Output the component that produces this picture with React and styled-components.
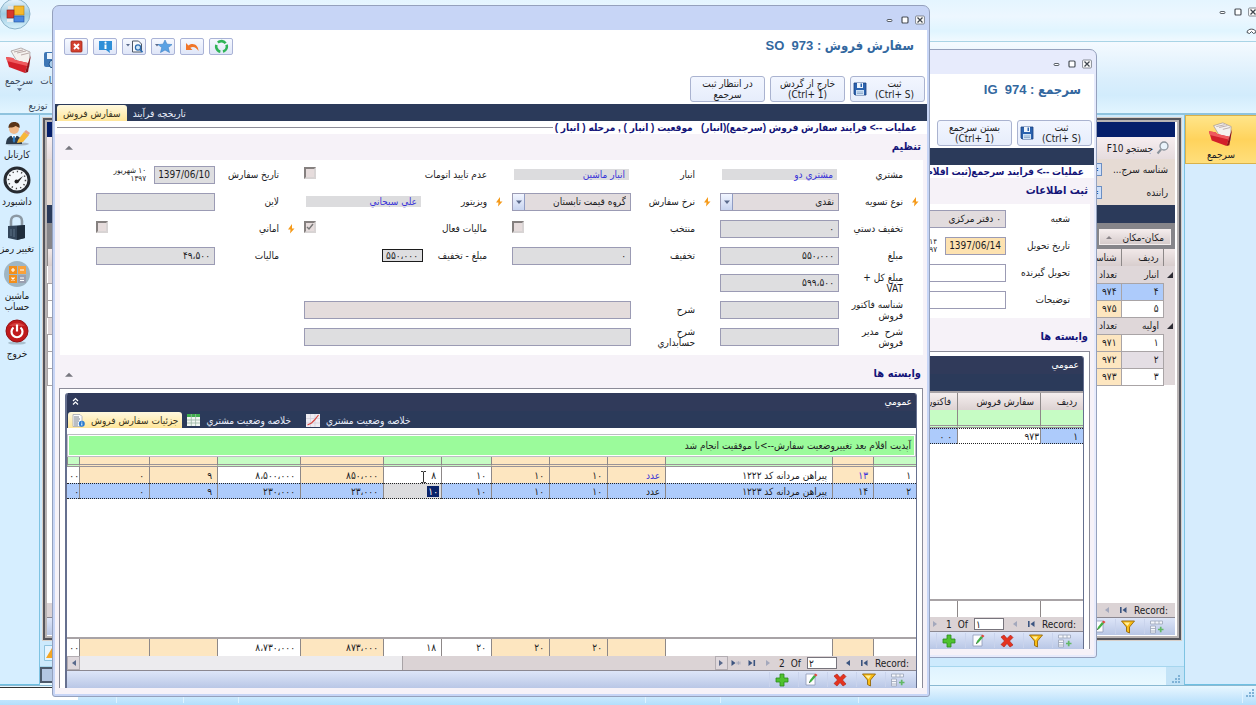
import React, { useId } from 'react';
import styled, { createGlobalStyle, css } from 'styled-components';

const GlobalStyle = createGlobalStyle`
  *, *::before, *::after { box-sizing: border-box; }
  html, body, #root { height: 100%; }
  body {
    margin: 0;
    overflow: hidden;
    font-family: "DejaVu Sans Condensed", "DejaVu Sans", sans-serif;
    font-size: 10px;
    line-height: 11px;
    color: #1c1c24;
  }
  button, input, select { font: inherit; color: inherit; margin: 0; border-radius: 0; }
`;

/* ---------- desktop shell ---------- */

const Desktop = styled.div`
  position: relative;
  height: 100vh;
  display: flex;
  flex-direction: column;
  overflow: hidden;
  background: #cdeafd;
`;

const TopStrip = styled.header`
  height: 41px;
  flex: none;
  display: flex;
  justify-content: space-between;
  background: linear-gradient(#e4f5ff, #edf7ff 40%, #e0f5ff 75%, #f0f9ff);
`;

const TopControls = styled.div`
  display: flex;
  flex-direction: column;
  align-items: flex-end;
  gap: 9px;
  padding-top: 7px;
  margin-right: -2px;
`;

const Ribbon = styled.nav`
  height: 74px;
  flex: none;
  padding-top: 4px;
  border-top: 1px solid #a9d4e6;
  border-bottom: 2px solid #8fc3de;
  background: linear-gradient(#f4faff, #d9eefc 55%, #d2ecfc 75%, #e2f5ff);
`;

const RibbonItems = styled.div`
  display: flex;
  height: 54px;
`;

const RibbonButton = styled.button`
  display: flex;
  flex-direction: column;
  align-items: center;
  gap: 1px;
  width: ${(p) => p.$width}px;
  padding: 0;
  border: 0;
  background: none;
  color: #3a4a5c;
  svg { flex: none; }
`;

const RibbonCaption = styled.div`
  width: 76px;
  text-align: center;
  color: #3a4a5c;
`;

const Body = styled.div`
  flex: 1;
  min-height: 0;
  display: flex;
`;

const LeftRail = styled.aside`
  width: 40px;
  flex: none;
  display: flex;
  flex-direction: column;
  gap: 6px;
  padding: 4px 5px 0 0;
  background: #d6eeff;
  border-right: 1px solid #7ec3e2;
  border-bottom: 1px solid #6fc0e2;
`;

const RailButton = styled.button`
  display: flex;
  flex-direction: column;
  align-items: center;
  gap: 2px;
  width: 100%;
  padding: 0;
  border: 0;
  background: none;
  white-space: pre;
  svg { flex: none; }
`;

const RightRail = styled.aside`
  width: 72px;
  flex: none;
  background: #d6ecfd;
  border-left: 1px solid #7ec3e2;
  border-bottom: 1px solid #6fc0e2;
`;

const ActiveRail = styled.button`
  width: 100%;
  height: 49px;
  display: flex;
  flex-direction: column;
  align-items: center;
  gap: 2px;
  padding: 5px 0 0;
  border: 1px solid #d9b14a;
  border-right: 0;
  background: linear-gradient(#ffe58a, #ffd35c 50%, #ffdf7c);
`;

const Workspace = styled.main`
  flex: 1;
  min-width: 0;
  display: flex;
  flex-direction: column;
  padding: 3px 3px 0;
`;

const Understrip = styled.div`
  display: flex;
  align-items: center;
  height: 26px;
  padding-left: 1px;
`;

const StatusStrip = styled.div`
  height: 19px;
  margin: 0 -3px;
  display: flex;
  justify-content: space-between;
  align-items: flex-start;
  border-top: 1px solid #a6d6ee;
  background: linear-gradient(#dff3ff, #e9f9ff);
`;

const StatusBox = styled.div`
  width: 40px;
  height: 16px;
  border: 2px solid #4c5a6c;
  background: #b3c6e2;
`;

const StatusGrip = styled.div`
  width: 18px;
  height: 18px;
  display: flex;
  align-items: flex-end;
  justify-content: center;
  background: #c3e3f7;
`;

const Taskbar = styled.footer`
  height: 20px;
  flex: none;
  display: flex;
  align-items: flex-start;
  padding-top: 1px;
  border-top: 1px solid #8ab9d2;
  background: linear-gradient(#e8f7ff, #cfeafd 50%, #b3dffc);
`;

const TaskBox = styled.div`
  width: 78px;
  height: 13px;
  background: #fff;
  border-top: 1px solid #333;
`;

const TaskSlot = styled.div`
  width: ${(p) => p.$width}px;
  height: 16px;
  border-right: 1px solid #dff3ff;
`;

/* ---------- child list docked in the workspace ---------- */

const ListFrame = styled.section`
  flex: 1;
  min-height: 0;
  display: flex;
  flex-direction: column;
  direction: rtl;
  border: 2px solid #55555c;
  outline: 1px solid #d8cfc8;
  background: #fff;
  padding: 2px 4px 3px 2px;
  box-shadow: inset 0 0 0 2px #b9b4b4;
`;

const ListTitle = styled.div`
  height: 15px;
  flex: none;
  background: #051f6b;
`;

const ListSearch = styled.div`
  height: 22px;
  flex: none;
  display: flex;
  align-items: center;
  gap: 3px;
  padding-right: 6px;
  background: linear-gradient(#f6eef0, #e6dcde);
`;

const ListCriteria = styled.div`
  height: 46px;
  flex: none;
  display: flex;
  flex-direction: column;
  justify-content: space-between;
  padding: 4px 0 6px;
  background: #e6dbd4;
`;

const CriteriaRow = styled.div`
  display: grid;
  grid-template-columns: 66px 14px;
  align-items: center;
  padding-right: 7px;
`;

const EqualButton = styled.button`
  height: 13px;
  padding: 0;
  line-height: 9px;
  border: 1px solid #6b8fc4;
  background: #cfe0fa;
  color: #23458a;
`;

const NavyBar = styled.div`
  height: 18px;
  flex: none;
  background: #2b3a5a;
`;

const GroupBar = styled.div`
  height: 26px;
  flex: none;
  display: flex;
  align-items: center;
  padding: 2px 4px 0;
  background: #86858a;
`;

const GroupButton = styled.button`
  width: 72px;
  height: 16px;
  display: flex;
  align-items: center;
  justify-content: space-between;
  padding: 0 6px;
  border: 1px solid #f4eeee;
  background: linear-gradient(#f4ecec, #d6cccc);
`;

const ListTable = styled.table`
  width: 100%;
  table-layout: fixed;
  border-collapse: collapse;
  th, td {
    height: 17px;
    padding: 0 4px;
    font-weight: 400;
    text-align: right;
    overflow: hidden;
    white-space: nowrap;
  }
  th { background: linear-gradient(#f1e8e8, #d8cece); border-left: 1px solid #8d8888; }
`;

const GroupRow = styled.tr`
  background: #dfd7d9;
  td:first-child { padding: 0 2px; }
`;

const ListCell = styled.td`
  border: 1px solid #a9a4a6;
  background: ${(p) => p.$bg};
`;

const Spacer = styled.div`
  flex: 1;
`;

/* ---------- floating windows ---------- */

const Frame = styled.section`
  position: absolute;
  left: ${(p) => p.$left}px;
  right: ${(p) => p.$right}px;
  top: ${(p) => p.$top}px;
  bottom: ${(p) => p.$bottom}px;
  display: flex;
  flex-direction: column;
  direction: rtl;
  border: 1px solid #95a1bd;
  border-radius: 7px 7px 3px 3px;
  padding: 0 2px 2px;
  background: ${(p) => (p.$active ? '#c7d5f6' : '#e7ebfc')};
`;

const TitleBar = styled.header`
  height: 24px;
  flex: none;
  direction: ltr;
  display: flex;
  justify-content: flex-end;
  align-items: center;
  padding: 4px 2px 0 0;
`;

const Controls = styled.div`
  direction: ltr;
  display: flex;
  gap: 5px;
`;

const ControlButton = styled.button`
  width: 10px;
  height: 10px;
  padding: 0;
  border: 0;
  background: none;
  line-height: 0;
`;

const Head = styled.div`
  height: 74px;
  flex: none;
  display: flex;
  flex-direction: column;
  justify-content: space-between;
  padding: 7px 2px 2px 9px;
  background: #fff;
`;

const HeadTop = styled.div`
  display: flex;
  justify-content: space-between;
  align-items: center;
  padding-right: 11px;
`;

const Title = styled.h1`
  margin: 0;
  font: 700 13px/18px "Liberation Sans", "DejaVu Sans Condensed", "DejaVu Sans", sans-serif;
  color: #33689f;
  white-space: pre;
`;

const ToolRow = styled.div`
  direction: ltr;
  display: flex;
  gap: 5px;
`;

const ToolButton = styled.button`
  width: 24px;
  height: 17px;
  display: flex;
  align-items: center;
  justify-content: center;
  gap: 1px;
  padding: 0;
  border: 1px solid #aab3d6;
  border-radius: 2px;
  background: linear-gradient(#f6f9ff, #dfe6f8);
`;

const ActionRow = styled.div`
  display: flex;
  gap: 5px;
`;

const ActionButton = styled.button`
  width: 75px;
  height: 26px;
  display: flex;
  align-items: center;
  justify-content: center;
  gap: 8px;
  padding: 0 ${(p) => (p.$icon ? 8 : 0)}px 0 0;
  border: 1px solid #aab3d0;
  border-radius: 3px;
  background: linear-gradient(#f2f6ff, #e6edfb);
  text-align: center;
`;

const TabStrip = styled.div`
  flex: none;
  height: 17px;
  display: flex;
  direction: ltr;
  align-items: flex-end;
  padding-left: 2px;
  background: #2b3a5a;
`;

const Tab = styled.button`
  height: 16px;
  display: flex;
  align-items: center;
  gap: 6px;
  padding: 0 ${(p) => p.$pad || 6}px;
  border: 0;
  border-radius: 3px 3px 0 0;
  white-space: nowrap;
  direction: ltr;
  background: ${(p) => (p.$active ? 'linear-gradient(#fff9df, #ffe69a)' : 'none')};
  color: ${(p) => (p.$active ? '#3a3420' : '#e9eefa')};
`;

const Page = styled.div`
  flex: 1;
  min-height: 0;
  display: flex;
  flex-direction: column;
  background: #f6f2f8;
`;

const Crumb = styled.div`
  height: 13px;
  flex: none;
  display: flex;
  align-items: center;
  gap: 2px;
  padding: 0 10px 0 2px;
  background: #fff;
  color: #141478;
  font-family: "Liberation Sans", "DejaVu Sans Condensed", "DejaVu Sans", sans-serif;
  font-weight: 700;
  white-space: pre;
  &::after {
    content: "";
    flex: 1;
    height: 1px;
    background: #8d8d98;
  }
`;

const SectionHead = styled.div`
  height: ${(p) => (p.$tall ? 33 : 26)}px;
  flex: none;
  display: flex;
  justify-content: space-between;
  align-items: center;
  padding: ${(p) => (p.$tall ? 4 : 0)}px 6px 0 10px;
`;

const SectionTitle = styled.h2`
  margin: 0;
  font-size: 11px;
  line-height: 14px;
  color: #141478;
`;

const FoldButton = styled.button`
  width: 8px;
  height: 8px;
  padding: 0;
  border: 0;
  background: none;
  line-height: 0;
`;

const Form = styled.form`
  flex: none;
  display: grid;
  grid-template-columns: repeat(4, 1fr);
  grid-auto-rows: 27px;
  margin: 0 4px 0 5px;
  padding: 1px 4px 5px 27px;
  background: #fff;
`;

const Cell = styled.div`
  grid-row: ${(p) => p.$row};
  grid-column: ${(p) => p.$col} / span ${(p) => p.$span || 1};
  display: grid;
  grid-template-columns: 16px 64px 1fr;
  align-items: center;
  padding-left: 9px;
`;

const Mark = styled.span`
  line-height: 0;
`;

const FieldLabel = styled.label`
  white-space: pre;
`;

const boxed = css`
  height: 18px;
  border: 1px solid #9b9bb4;
  background: ${(p) => p.$bg || '#dedee0'};
`;

const TextBox = styled.input`
  ${boxed}
  width: ${(p) => (p.$width ? p.$width + 'px' : '100%')};
  min-width: 0;
  padding: 0 4px;
  outline: 0;
`;

const Readout = styled.output`
  margin: 0 2px;
  height: 11px;
  padding: 0 4px;
  background: #dcdcde;
  color: #3a34d8;
`;

const Boxed = styled.output`
  width: 41px;
  height: 13px;
  padding: 0 4px;
  border: 1px solid #1c1c1c;
  background: #dedee0;
`;

const Combo = styled.div`
  ${boxed}
  display: flex;
`;

const Select = styled.select`
  flex: 1;
  min-width: 0;
  appearance: none;
  border: 0;
  padding: 0 4px;
  background: #e2dcde;
`;

const ComboArrow = styled.span`
  width: 12px;
  display: flex;
  align-items: center;
  justify-content: center;
  border-right: 1px solid #8f9cc4;
  background: linear-gradient(#f1f5ff, #c8d4ef);
`;

const Check = styled.input`
  appearance: none;
  justify-self: end;
  align-self: start;
  width: 12px;
  height: 12px;
  border: 2px solid;
  border-color: #85807f #d8d4d4 #d8d4d4 #85807f;
  background: #e6dcdc;
  && { margin-top: 6px; }
  &:checked {
    background: #e6dcdc url("data:image/svg+xml,%3Csvg xmlns='http://www.w3.org/2000/svg' viewBox='0 0 8 8'%3E%3Cpath d='M1 4l2 2 4-5' fill='none' stroke='%23777' stroke-width='1.4'/%3E%3C/svg%3E");
  }
`;

const DateWrap = styled.div`
  display: flex;
  align-items: center;
  gap: 8px;
`;

const DateHint = styled.span`
  font-size: 8px;
  line-height: 8px;
  width: 34px;
`;

const DetailBox = styled.div`
  flex: 1;
  min-height: 0;
  display: flex;
  flex-direction: column;
  margin: 0 4px 6px;
  padding: 4px 5px 0 5px;
  border: 1px solid #8b8b98;
  border-bottom: 0;
  background: #fff;
`;

const Detail = styled.div`
  flex: 1;
  min-height: 0;
  display: flex;
  flex-direction: column;
  border: solid #66708f;
  border-width: 0 1px 0 2px;
  border-radius: 3px 3px 0 0;
  overflow: hidden;
`;

const DetailHead = styled.div`
  flex: none;
  height: 18px;
  display: flex;
  align-items: center;
  justify-content: space-between;
  padding: 0 4px 2px;
  background: #303a5a;
  color: #fff;
`;

const DetailTabs = styled(TabStrip)`
  padding-left: 1px;
`;

const Message = styled.div`
  flex: none;
  height: 23px;
  display: flex;
  align-items: center;
  margin-top: 6px;
  padding: 0 4px;
  border: 1px solid #bdbdc4;
  box-shadow: inset 0 0 0 1px #fff;
  background: #9bfb9b;
`;

const GridTable = styled.table`
  width: 100%;
  flex: none;
  table-layout: fixed;
  border-collapse: separate;
  border-spacing: 0;
  border-top: ${(p) => (p.$rule ? '2px solid #a8a3a6' : '0')};
`;

const GridHeadCell = styled.th`
  height: 17px;
  padding: 0 6px;
  border-left: 1px solid #8d8888;
  background: linear-gradient(#f5eeee, #dcd2d2);
  font-weight: 400;
  text-align: right;
  white-space: nowrap;
  overflow: hidden;
`;

const GridRow = styled.tr`
  td {
    ${(p) => p.$selected && css`
      background: #adcbfb;
      color: #1c1c24;
      border-top: 1px dotted #222;
      border-bottom: 1px dotted #222;
    `}
  }
`;

const FilterCell = styled.td`
  height: ${(p) => p.$height}px;
  padding: 0;
  border-left: 1px solid #8d8888;
  border-bottom: 3px double #9a9498;
  background: ${(p) => (p.$warm ? '#fde6c0' : '#c6fcc4')};
`;

const GridCell = styled.td`
  height: ${(p) => p.$height || 16}px;
  padding: 0 5px;
  border-left: 1px solid #8d8888;
  background: ${(p) => (p.$warm ? '#fde6c0' : '#fff')};
  color: ${(p) => (p.$link ? '#3a34d8' : 'inherit')};
  text-align: right;
  white-space: nowrap;
  overflow: hidden;
  &:last-child {
    padding: 0;
    border-left: 0;
  }
`;

const EditCell = styled(GridCell)`
  && { background: #dcdcde; }
  padding: 0 2px;
`;

const PlainCell = styled(GridCell)`
  && { background: #fff; }
  padding: 0 1px;
`;

const Marked = styled.span`
  display: inline-block;
  padding: 0 1px;
  background: #0a246a;
  color: #fff;
`;

const GridBody = styled.div`
  flex: 1;
  min-height: 0;
  background: #fff;
`;

const NavBar = styled.div`
  flex: none;
  height: 15px;
  display: flex;
  align-items: center;
  direction: ltr;
  background: #dbd3d5;
  border-bottom: 1px solid #8b8790;
`;

const ScrollTrack = styled.div`
  flex: 1;
  height: 100%;
  display: flex;
  background: #ecebee;
`;

const ScrollGap = styled.div`
  flex: 325;
`;

const ScrollThumb = styled.div`
  flex: 315;
  background: #dbd3d5;
  border-left: 1px solid #a8a3a6;
`;

const ScrollButton = styled.button`
  width: 13px;
  height: 100%;
  display: flex;
  align-items: center;
  justify-content: center;
  padding: 0;
  border: 1px solid #b3adb2;
  background: #dfd8dc;
`;

const NavItems = styled.div`
  display: flex;
  align-items: center;
  gap: 6px;
  margin-left: auto;
  padding: 0 7px 0 3px;
`;

const NavButton = styled.button`
  width: 10px;
  height: 10px;
  padding: 0;
  border: 0;
  background: none;
  line-height: 0;
`;

const RecordInput = styled.input`
  width: 30px;
  height: 12px;
  padding: 0 1px;
  border: 1px solid #77747c;
  background: #fff;
`;

const EditBar = styled.div`
  flex: none;
  height: 17px;
  display: flex;
  direction: rtl;
  align-items: center;
  padding: 0 7px;
  gap: 5px;
  background: linear-gradient(#dde5f8, #b9c7e6);
`;

const EditButton = styled.button`
  width: 24px;
  height: 15px;
  display: flex;
  align-items: center;
  justify-content: center;
  padding: 0;
  border: 0;
  border-left: 1px solid #c9d3ec;
  background: none;
`;

const PointerMark = styled.svg`
  position: absolute;
  left: 419px;
  top: 470px;
`;

/* ---------- drawings ---------- */

const Folder = ({ size = 28 }) => (
  <svg width={size} height={size} viewBox="0 0 28 28">
    <path d="M6 5l10-3 9 4-1 15-7 3z" fill="#f4f1ee" stroke="#9c9090" strokeWidth=".7" />
    <path d="M9 6l9-2M12 7l9-2M16 9l8-2" stroke="#b9aaa8" strokeWidth="1" />
    <path d="M1 11l7 1 2 2 13 3-3 10-16-6z" fill="#d3202a" />
    <path d="M1 11l7 1 2 2 13 3-1 3-20-5z" fill="#ef5a5e" />
    <path d="M23 17l3-8-3 17-3 1z" fill="#8e1118" />
  </svg>
);

const Orb = () => (
  <svg width="32" height="32" viewBox="0 0 32 32">
    <defs>
      <linearGradient id="orb" x1="0" y1="0" x2="0" y2="1">
        <stop offset="0" stopColor="#e9f4fb" />
        <stop offset=".5" stopColor="#9ccbe2" />
        <stop offset="1" stopColor="#d8f2fc" />
      </linearGradient>
    </defs>
    <circle cx="15" cy="14" r="15" fill="url(#orb)" stroke="#8bb3ca" />
    <rect x="14" y="6" width="10" height="9" fill="#f4b92c" stroke="#b87e10" strokeWidth=".6" />
    <rect x="7" y="10" width="7" height="8" fill="#d6382c" stroke="#931c14" strokeWidth=".6" />
    <rect x="14" y="16" width="10" height="6" fill="#4b87e0" stroke="#23509c" strokeWidth=".6" />
    <rect x="8" y="6" width="5" height="3" fill="#e8e3de" />
    <rect x="7" y="19" width="6" height="3" fill="#e8eef2" />
  </svg>
);

const Person = () => (
  <svg width="28" height="28" viewBox="0 0 28 28">
    <ellipse cx="14" cy="25" rx="12" ry="1.6" fill="#a9bac8" />
    <path d="M3 25c0-6 3-8 8-9 5 1 8 3 8 9z" fill="#2c3b4c" />
    <path d="M8 16l3 5 3-5z" fill="#fff" />
    <path d="M10.300 17h1.400l.6 5-1.300 2-1.300-2z" fill="#2f7dc4" />
    <circle cx="11" cy="10" r="5" fill="#f0b888" />
    <path d="M5.500 9c0-5 3-6 6-6s6 2 5 6c-2-1-3-2-4-2-2 2-5 1-7 2z" fill="#5a3418" />
    <path d="M15 21l6-8 5 3-6 7-6 1z" fill="#f6b83a" />
    <path d="M21 13l2-2 4 3-1.500 2z" fill="#e5a08a" />
  </svg>
);

const Gauge = () => (
  <svg width="28" height="28" viewBox="0 0 28 28">
    <circle cx="14" cy="14" r="12" fill="#f4f8fb" stroke="#262a30" strokeWidth="3" />
    <circle cx="14" cy="14" r="8.500" fill="none" stroke="#444" strokeWidth="1.500" strokeDasharray="1.300 3.100" />
    <path d="M12 16l8-6-5 7z" fill="#222" />
    <circle cx="13.500" cy="15.500" r="2" fill="#222" />
  </svg>
);

const Lock = () => (
  <svg width="28" height="28" viewBox="0 0 28 28">
    <path d="M8 14V8c0-7 11-7 11 0v6" fill="none" stroke="#8b98a3" strokeWidth="2.600" />
    <path d="M5 13l17-1v13l-8 2-9-2z" fill="#34465a" />
    <path d="M14 13l8-1v13l-8 2z" fill="#1f2d3c" />
    <path d="M8 16v7M11 16v8" stroke="#5d7287" />
  </svg>
);

const Calc = () => (
  <svg width="28" height="28" viewBox="0 0 28 28">
    <circle cx="14" cy="14" r="13" fill="#9fb6c4" />
    <rect x="6" y="6" width="8" height="8" fill="#f28f1c" />
    <rect x="15" y="6" width="8" height="8" fill="#f9a13a" />
    <rect x="6" y="15" width="8" height="8" fill="#f28f1c" />
    <rect x="15" y="15" width="8" height="8" fill="#9a9fb0" />
    <path d="M8 10h4M10 8v4M17 10h4M8.500 17.500l3 3M11.500 17.500l-3 3M17 18h4M17 20.500h4" stroke="#fff" strokeWidth="1.100" />
  </svg>
);

const Power = () => (
  <svg width="28" height="28" viewBox="0 0 28 28">
    <ellipse cx="14" cy="25" rx="9" ry="1.600" fill="#a9c0cf" />
    <circle cx="14" cy="13" r="11" fill="#c01a1c" stroke="#951014" />
    <path d="M6 8a10 8 0 0 1 16 0z" fill="#e8605c" opacity=".5" />
    <path d="M10.500 9.500a5.500 5.500 0 1 0 7 0" fill="none" stroke="#fff" strokeWidth="2.200" />
    <path d="M14 6.500v7" stroke="#fff" strokeWidth="2.200" />
  </svg>
);

const Disk = () => (
  <svg width="14" height="14" viewBox="0 0 14 14">
    <path d="M1 1h12v12H2l-1-1z" fill="#2b62ae" stroke="#1c4380" strokeWidth=".8" />
    <rect x="4" y="1" width="6" height="5" fill="#eef4fb" />
    <rect x="7.500" y="1.500" width="1.500" height="3.500" fill="#2b62ae" />
    <rect x="3" y="8" width="8" height="5" fill="#cfe2f6" />
    <path d="M4 10h6M4 11.500h6" stroke="#7d9cc2" strokeWidth=".7" />
  </svg>
);

const Bolt = () => (
  <svg width="8" height="10" viewBox="0 0 8 10">
    <path d="M5 0L1 5.500h2.500L3 9.500l4.500-5H5z" fill="#f59a1a" />
  </svg>
);

const Triangle = ({ dir = 'down', color = '#5a6a8c', size = 6 }) => {
  const shapes = { down: '0,1.500 6,1.500 3,5', up: '0,5 6,5 3,2', left: '5,0 5,6 1,3', right: '1,0 1,6 5,3' };
  return (
    <svg width={size} height={size} viewBox="0 0 6 6">
      <polygon points={shapes[dir]} fill={color} />
    </svg>
  );
};

const controlShapes = {
  min: <rect x="2" y="4.500" width="5" height="2" rx="1" fill="#fff" stroke="#4a5058" strokeWidth=".9" />,
  max: <rect x="2" y="2" width="6" height="6" rx="1" fill="#fff" stroke="#4a5058" strokeWidth="1.200" />,
  close: (
    <>
      <rect x=".6" y="1" width="8.800" height="8" rx="1" fill="#fff" stroke="#6a7078" strokeWidth=".8" />
      <path d="M2.500 2.500l5 5M7.500 2.500l-5 5" stroke="#3f454d" strokeWidth="1.300" />
    </>
  ),
};

const WindowControls = () => (
  <Controls>
    {[['min', 'کوچک'], ['max', 'بزرگ'], ['close', 'بستن']].map(([kind, name]) => (
      <ControlButton key={kind} type="button" aria-label={name}>
        <svg width="10" height="10" viewBox="0 0 10 10">{controlShapes[kind]}</svg>
      </ControlButton>
    ))}
  </Controls>
);

const Plus = () => (
  <svg width="14" height="14" viewBox="0 0 14 14">
    <path d="M5 1h4v4h4v4H9v4H5V9H1V5h4z" fill="#4fc22e" stroke="#2b8a1c" strokeWidth=".8" />
  </svg>
);
const Pencil = () => (
  <svg width="14" height="14" viewBox="0 0 14 14">
    <path d="M2 1h9v11H2z" fill="#fdfdff" stroke="#8f9bb8" strokeWidth=".8" />
    <path d="M5 10l1-3 4-5 2 1.500-4.500 5z" fill="#43b045" />
    <path d="M10 2l1.500-1.500L13.500 2 12 3.500z" fill="#e0483e" />
    <path d="M5 10l.5-1.500 1 .8z" fill="#333" />
  </svg>
);
const Cross = () => (
  <svg width="14" height="14" viewBox="0 0 14 14">
    <path d="M1 3l3-2 3 3.500L10.500 1 13 3.500 9.500 7l3.500 4-3 2-3-3.500L4 13l-3-2.500L4.500 7z" fill="#e5331f" stroke="#a81d10" strokeWidth=".6" />
  </svg>
);
const Funnel = () => (
  <svg width="14" height="14" viewBox="0 0 14 14">
    <path d="M.5 1h13L8.500 7v6l-3-1.500V7z" fill="#f9bc14" stroke="#94680c" strokeWidth=".9" />
    <path d="M3 2.500h6L6.500 6z" fill="#fff0a0" />
  </svg>
);
const Columns = () => (
  <svg width="14" height="14" viewBox="0 0 14 14">
    <path d="M.5 1h12v3H.5zM.5 6h5v7h-5z" fill="#f6f7fb" stroke="#9aa3b8" strokeWidth=".8" />
    <path d="M5 1v3M9 1v3M.5 8.500h5M.5 11h5" stroke="#9aa3b8" strokeWidth=".8" />
    <path d="M8 9.500h5.500M10.700 6.800v5.500" stroke="#62b865" strokeWidth="1.700" />
  </svg>
);

const toolIcons = [
  ['بستن', (
    <svg width="13" height="13" viewBox="0 0 13 13">
      <rect x="1" y="1" width="11" height="11" rx="1" fill="#d3412f" stroke="#a22a1c" strokeWidth=".8" />
      <path d="M4 4l5 5M9 4L4 9" stroke="#fff" strokeWidth="1.900" />
    </svg>
  )],
  ['راهنما', (
    <svg width="15" height="13" viewBox="0 0 15 13">
      <path d="M1 1h13v9h-2.500l.5 3-4-3H1z" fill="#2f8fd8" />
      <path d="M7.500 4.500v4.500" fill="none" stroke="#fff" strokeWidth="2" />
      <circle cx="7.500" cy="2.700" r="1.100" fill="#fff" />
    </svg>
  )],
  ['پیش نمایش', (
    <svg width="17" height="13" viewBox="0 0 17 13">
      <path d="M0 4h4L2 6.500z" fill="#5a6a8c" />
      <path d="M6.500 1h6l3 3v8h-9z" fill="#f8fafd" stroke="#4c5868" />
      <circle cx="12" cy="7.500" r="2.600" fill="#cfe8fa" stroke="#2b6cb0" strokeWidth="1.200" />
      <path d="M14 9.500l2.500 2.700" stroke="#2b6cb0" strokeWidth="1.700" />
    </svg>
  )],
  ['برگزیده', (
    <svg width="17" height="13" viewBox="0 0 17 13">
      <path d="M0 4h4L2 6.500z" fill="#5a6a8c" />
      <path d="M10 0l2 4.200 5 .4-3.800 3 1.300 4.900L10 10l-4.500 2.500 1.300-4.900L3 4.600l5-.4z" fill="#5aa2e4" stroke="#3c7fc4" strokeWidth=".6" />
    </svg>
  )],
  ['بازگشت', (
    <svg width="15" height="13" viewBox="0 0 15 13">
      <path d="M1 3v7h6.500L5.300 7.700C8 6 11 7 13.500 11 13.500 5 8 2 3.500 5.500z" fill="#f0762a" />
    </svg>
  )],
  ['تازه سازی', (
    <svg width="15" height="15" viewBox="0 0 15 15">
      <circle cx="7.500" cy="7.500" r="5.300" fill="none" stroke="#2fb457" strokeWidth="2.600" strokeDasharray="8.500 2.600" transform="rotate(-20 7.500 7.500)" />
    </svg>
  )],
];

const SheetIcon = () => (
  <svg width="13" height="13" viewBox="0 0 13 13">
    <path d="M1 .5h7l2 2v10H1z" fill="#fbfbfd" stroke="#a5a8b2" strokeWidth=".8" />
    <path d="M2 3h5M2 5h6M2 7h5M2 9h4M2 11h4" stroke="#6c7480" strokeWidth=".9" />
    <circle cx="9.800" cy="9.800" r="3" fill="#2b7cd0" />
    <path d="M9.800 9.300v2.200M9.800 7.700v.9" stroke="#fff" strokeWidth="1" />
  </svg>
);
const GridIcon = () => (
  <svg width="13" height="12" viewBox="0 0 13 12">
    <path d="M0 0h13v12H0z" fill="#f1f6f2" />
    <path d="M0 0h13v3H0z" fill="#3fae4c" />
    <path d="M0 6h13M0 9h13M4.300 0v12M8.600 0v12" stroke="#9ab6a4" strokeWidth=".8" />
  </svg>
);
const ChartIcon = () => (
  <svg width="14" height="13" viewBox="0 0 14 13">
    <path d="M0 0h14v13H0z" fill="#eeecf2" />
    <path d="M4.500 0v13M9 0v13M0 4.500h14M0 9h14" stroke="#d0ccd8" strokeWidth=".7" />
    <path d="M1.500 11l4-2 3-3 4-5" fill="none" stroke="#d84840" strokeWidth="1.200" />
  </svg>
);
const SearchIcon = () => (
  <svg width="13" height="14" viewBox="0 0 13 14">
    <circle cx="8" cy="5" r="4" fill="#e9f3fb" stroke="#8a939c" strokeWidth="1.300" />
    <path d="M5 8.500L1.500 12.500" stroke="#8a939c" strokeWidth="2" />
  </svg>
);
const Chevrons = () => (
  <svg width="9" height="9" viewBox="0 0 9 9">
    <path d="M2 4l2.500-2.500L7 4M2 7.500L4.500 5 7 7.500" fill="none" stroke="#fff" strokeWidth="1.200" />
  </svg>
);
const Grip = () => (
  <svg width="12" height="12" viewBox="0 0 12 12">
    <path d="M9 2h2v2H9zM9 5h2v2H9zM9 8h2v2H9zM6 5h2v2H6zM6 8h2v2H6zM3 8h2v2H3z" fill="#7fb2d6" />
  </svg>
);
const JumpIcon = ({ kind, dim }) => {
  const color = dim ? '#a3a8bc' : '#3c5580';
  return (
    <svg width="10" height="10" viewBox="0 0 10 10">
      {kind === 'first' && <path d="M2 2h1.600v6H2zM8.500 2v6L4.500 5z" fill={color} />}
      {kind === 'prev' && <path d="M7 2v6L3 5z" fill={color} />}
      {kind === 'next' && <path d="M3 2v6l4-3z" fill={color} />}
      {kind === 'last' && <path d="M1.500 2v6l4-3zM6.500 2h1.600v6H6.500z" fill={color} />}
      {kind === 'new' && (
        <>
          <path d="M.5 2v6l4-3z" fill={color} />
          <path d="M5 5h5M7.500 3v4M6 3.500l3 3M9 3.500l-3 3" stroke="#a3a8bc" strokeWidth=".7" />
        </>
      )}
    </svg>
  );
};

/* ---------- shared pieces ---------- */

const Jump = ({ kind, dim }) => (
  <NavButton type="button" aria-label={kind}>
    <JumpIcon kind={kind} dim={dim} />
  </NavButton>
);

const RecordNav = ({ current, value, scroll, dimBack }) => (
  <NavBar>
    {scroll && (
      <>
        <ScrollButton type="button" aria-label="چپ"><Triangle dir="left" /></ScrollButton>
        <ScrollTrack><ScrollGap /><ScrollThumb /></ScrollTrack>
        <ScrollButton type="button" aria-label="راست"><Triangle dir="right" /></ScrollButton>
      </>
    )}
    <NavItems>
      <Jump kind="new" />
      <Jump kind="last" />
      <Jump kind="next" dim />
      <span>{current}</span>
      <span>Of</span>
      <RecordInput aria-label="Record" defaultValue={value} />
      <Jump kind="prev" dim={dimBack} />
      <Jump kind="first" />
      <span>Record:</span>
    </NavItems>
  </NavBar>
);

const EditTools = ({ canDelete = true }) => (
  <EditBar>
    <EditButton type="button" aria-label="ستون ها"><Columns /></EditButton>
    <EditButton type="button" aria-label="فیلتر"><Funnel /></EditButton>
    {canDelete && <EditButton type="button" aria-label="حذف"><Cross /></EditButton>}
    <EditButton type="button" aria-label="ویرایش"><Pencil /></EditButton>
    <EditButton type="button" aria-label="افزودن"><Plus /></EditButton>
  </EditBar>
);

const Field = ({ row, col, span, label, required, kind = 'text', value = '', bg, checked, hint }) => {
  const id = useId();
  return (
    <Cell $row={row} $col={col} $span={span}>
      <Mark>{required && <Bolt />}</Mark>
      <FieldLabel htmlFor={id}>{label}</FieldLabel>
      {kind === 'text' && <TextBox id={id} defaultValue={value} $bg={bg} />}
      {kind === 'read' && <Readout id={id}>{value}</Readout>}
      {kind === 'boxed' && <Boxed id={id}>{value}</Boxed>}
      {kind === 'check' && <Check id={id} type="checkbox" defaultChecked={checked} />}
      {kind === 'date' && (
        <DateWrap>
          <TextBox id={id} defaultValue={value} $bg={bg} $width={61} />
          <DateHint>{hint}</DateHint>
        </DateWrap>
      )}
      {kind === 'select' && (
        <Combo>
          <Select id={id} defaultValue={value}><option>{value}</option></Select>
          <ComboArrow><Triangle /></ComboArrow>
        </Combo>
      )}
    </Cell>
  );
};

const Section = ({ title, tall }) => (
  <SectionHead $tall={tall}>
    <SectionTitle>{title}</SectionTitle>
    <FoldButton type="button" aria-label={title}><Triangle dir="up" color="#77777f" size={8} /></FoldButton>
  </SectionHead>
);

const Action = ({ first, second, icon }) => (
  <ActionButton type="button" $icon={icon}>
    <span>{first}<br /><bdi>{second}</bdi></span>
    {icon && <Disk />}
  </ActionButton>
);

/* ---------- data ---------- */

const columns = [
  { width: 43 },
  { width: 41, warm: true, link: true },
  { width: null },
  { width: 58, warm: true, link: true },
  { width: 58, warm: true },
  { width: 58, warm: true },
  { width: 50 },
  { width: 58 },
  { width: 83, warm: true },
  { width: 83 },
  { width: 68, warm: true },
  { width: 70, warm: true },
  { width: 12 },
];

const orderRow = ['۱', '۱۳', 'پیراهن مردانه کد ۱۲۲۲', 'عدد', '۱۰', '۱۰', '۱۰', '۸', '۸۵۰،۰۰۰', '۸،۵۰۰،۰۰۰', '۹', '۰', '۰۰'];
const selectedRow = ['۲', '۱۴', 'پیراهن مردانه کد ۱۲۲۳', 'عدد', '۱۰', '۱۰', '۱۰', '۱۰', '۲۳،۰۰۰', '۲۳۰،۰۰۰', '۹', '۰', '۰'];
const totals = ['', '', '', '', '۲۰', '۲۰', '۲۰', '۱۸', '۸۷۳،۰۰۰', '۸،۷۳۰،۰۰۰', '', '', '۰۰'];

const Cols = ({ list }) => (
  <colgroup>
    {list.map((c, i) => <col key={i} style={c.width ? { width: c.width } : undefined} />)}
  </colgroup>
);

const fields = [
  { row: 1, col: 1, label: 'مشتري', kind: 'read', value: 'مشتري دو' },
  { row: 1, col: 2, label: 'انبار', kind: 'read', value: 'انبار ماشین' },
  { row: 1, col: 3, label: 'عدم تایید اتومات', kind: 'check' },
  { row: 1, col: 4, label: 'تاریخ سفارش', kind: 'date', value: '1397/06/10', hint: '۱۰ شهریور ۱۳۹۷' },
  { row: 2, col: 1, label: 'نوع تسویه', kind: 'select', value: 'نقدي', required: true },
  { row: 2, col: 2, label: 'نرخ سفارش', kind: 'select', value: 'گروه قیمت تابستان', required: true },
  { row: 2, col: 3, label: 'ویزیتور', kind: 'read', value: 'علي سبحاني', required: true },
  { row: 2, col: 4, label: 'لاین' },
  { row: 3, col: 1, label: 'تخفیف دستي', value: '۰' },
  { row: 3, col: 2, label: 'منتخب', kind: 'check' },
  { row: 3, col: 3, label: 'مالیات فعال', kind: 'check', checked: true },
  { row: 3, col: 4, label: 'اماني', kind: 'check', required: true },
  { row: 4, col: 1, label: 'مبلغ', value: '۵۵۰،۰۰۰' },
  { row: 4, col: 2, label: 'تخفیف', value: '۰' },
  { row: 4, col: 3, label: 'مبلغ - تخفیف', kind: 'boxed', value: '۵۵۰،۰۰۰' },
  { row: 4, col: 4, label: 'مالیات', value: '۴۹،۵۰۰' },
  { row: 5, col: 1, label: 'مبلغ کل +\nVAT', value: '۵۹۹،۵۰۰' },
  { row: 6, col: 1, label: 'شناسه فاکتور\nفروش' },
  { row: 6, col: 2, span: 2, label: 'شرح', bg: '#e4dcdc' },
  { row: 7, col: 1, label: 'شرح  مدیر\nفروش' },
  { row: 7, col: 2, span: 2, label: 'شرح\nحسابداري' },
];

/* ---------- windows ---------- */

const OrderWindow = () => (
  <Frame $left={52} $right={326} $top={5} $bottom={8} $active>
    <TitleBar><WindowControls /></TitleBar>
    <Head>
      <HeadTop>
        <Title>{'سفارش فروش : SO  973'}</Title>
        <ToolRow>
          {toolIcons.map(([name, icon]) => (
            <ToolButton key={name} type="button" aria-label={name}>{icon}</ToolButton>
          ))}
        </ToolRow>
      </HeadTop>
      <ActionRow>
        <Action first="ثبت" second="(Ctrl+ S)" icon />
        <Action first="خارج از گردش" second="(Ctrl+ 1)" />
        <Action first="در انتظار ثبت" second="سرجمع" />
      </ActionRow>
    </Head>
    <TabStrip>
      <Tab type="button" $active>سفارش فروش</Tab>
      <Tab type="button">تاریخچه فرآیند</Tab>
    </TabStrip>
    <Page>
      <Crumb>{'عملیات --> فرایند سفارش فروش (سرجمع)(انبار)   موقعیت ( انبار ) , مرحله ( انبار )'}</Crumb>
      <Section title="تنظیم" />
      <Form>
        {fields.map((f) => <Field key={f.label} {...f} />)}
      </Form>
      <Section title="وابسته ها" tall />
      <DetailBox>
        <Detail>
          <DetailHead><span>عمومي</span><Chevrons /></DetailHead>
          <DetailTabs>
            <Tab type="button" $active $pad={4}><SheetIcon />جزئیات سفارش فروش</Tab>
            <Tab type="button" $pad={5}><GridIcon />خلاصه وضعیت مشتري</Tab>
            <Tab type="button" $pad={10}><ChartIcon />خلاصه وضعیت مشتري</Tab>
          </DetailTabs>
          <Message>{'آپدیت اقلام بعد تغییروضعیت سفارش-->با موفقیت انجام شد'}</Message>
          <GridTable>
            <Cols list={columns} />
            <tbody>
              <tr>{columns.map((c, i) => <FilterCell key={i} $height={10} $warm={c.warm} />)}</tr>
              <GridRow>
                {orderRow.map((v, i) => (
                  <GridCell key={i} $warm={columns[i].warm} $link={columns[i].link}>{v}</GridCell>
                ))}
              </GridRow>
              <GridRow $selected>
                {selectedRow.map((v, i) => (i === 7
                  ? <EditCell key={i}><Marked>{v}</Marked></EditCell>
                  : <GridCell key={i}>{v}</GridCell>))}
              </GridRow>
            </tbody>
          </GridTable>
          <GridBody />
          <GridTable $rule>
            <Cols list={columns} />
            <tbody>
              <tr>
                {totals.map((v, i) => <GridCell key={i} $height={17} $warm={columns[i].warm}>{v}</GridCell>)}
              </tr>
            </tbody>
          </GridTable>
          <RecordNav current="2" value="۲" scroll />
          <EditTools />
        </Detail>
      </DetailBox>
    </Page>
  </Frame>
);

const shipColumns = [{ width: 43 }, { width: 83 }, { width: 70 }, { width: null }];

const ShipmentWindow = () => (
  <Frame $left={219} $right={159} $top={49} $bottom={47}>
    <TitleBar><WindowControls /></TitleBar>
    <Head>
      <HeadTop><Title>{'سرجمع : IG  974'}</Title></HeadTop>
      <ActionRow>
        <Action first="ثبت" second="(Ctrl+ S)" icon />
        <Action first="بستن سرجمع" second="(Ctrl+ 1)" />
      </ActionRow>
    </Head>
    <TabStrip />
    <Page>
      <Crumb>{'عملیات --> فرایند سرجمع(ثبت اقلام)'}</Crumb>
      <Section title="ثبت اطلاعات" />
      <Form>
        <Field row={1} col={1} label="شعبه" value="۰ دفتر مرکزي" bg="#e2dcde" />
        <Field row={2} col={1} label="تاریخ تحویل" kind="date" value="1397/06/14" hint="۱۴ شهریور ۱۳۹۷" bg="#fde2b0" />
        <Field row={3} col={1} label="تحویل گیرنده" bg="#fff" />
        <Field row={4} col={1} label="توضیحات" bg="#fff" />
      </Form>
      <Section title="وابسته ها" tall />
      <DetailBox>
        <Detail>
          <DetailHead><span>عمومي</span><Chevrons /></DetailHead>
          <DetailTabs />
          <GridTable $rule>
            <Cols list={shipColumns} />
            <thead>
              <tr>
                <GridHeadCell>ردیف</GridHeadCell>
                <GridHeadCell>سفارش فروش</GridHeadCell>
                <GridHeadCell>فاکتور</GridHeadCell>
                <GridHeadCell />
              </tr>
            </thead>
            <tbody>
              <tr>{shipColumns.map((c, i) => <FilterCell key={i} $height={18} />)}</tr>
              <GridRow $selected>
                <GridCell>۱</GridCell>
                <PlainCell>۹۷۳</PlainCell>
                <GridCell>۰ ۰</GridCell>
                <GridCell />
              </GridRow>
            </tbody>
          </GridTable>
          <GridBody />
          <GridTable $rule>
            <Cols list={shipColumns} />
            <tbody><tr>{shipColumns.map((c, i) => <GridCell key={i} $height={16} />)}</tr></tbody>
          </GridTable>
          <RecordNav current="1" value="۱" dimBack />
          <EditTools />
        </Detail>
      </DetailBox>
    </Page>
  </Frame>
);

const listColumns = [{ width: 12 }, { width: 42 }, { width: 40 }, { width: null }];
const listGroups = [
  { name: 'انبار', rows: [['۴', '۹۷۴', '#adcbfb', '#adcbfb'], ['۵', '۹۷۵', '#fff', '#fde6c0']] },
  { name: 'اولیه', rows: [['۱', '۹۷۱', '#fff', '#fde6c0'], ['۲', '۹۷۲', '#e4dee4', '#fde6c0'], ['۳', '۹۷۳', '#fff', '#fde6c0']] },
];

const ShipmentList = () => (
  <ListFrame>
    <ListTitle />
    <ListSearch><SearchIcon /><span>جستجو F10</span></ListSearch>
    <ListCriteria>
      <CriteriaRow><span>شناسه سرج...</span><EqualButton type="button">=</EqualButton></CriteriaRow>
      <CriteriaRow><span>راننده</span><EqualButton type="button">=</EqualButton></CriteriaRow>
    </ListCriteria>
    <NavyBar />
    <GroupBar>
      <GroupButton type="button">مکان-مکان<Triangle dir="up" color="#8a8488" /></GroupButton>
    </GroupBar>
    <ListTable>
      <Cols list={listColumns} />
      <thead><tr><th /><th>ردیف</th><th>شناسه</th><th /></tr></thead>
      <tbody>
        {listGroups.map((g) => (
          <React.Fragment key={g.name}>
            <GroupRow>
              <td>
                <svg width="6" height="6" viewBox="0 0 6 6"><path d="M6 0v6H0z" fill="#2c2c34" /></svg>
              </td>
              <td>{g.name}</td>
              <td>تعداد</td>
              <td />
            </GroupRow>
            {g.rows.map(([n, code, a, b]) => (
              <GroupRow key={n}>
                <td />
                <ListCell $bg={a}>{n}</ListCell>
                <ListCell $bg={b}>{code}</ListCell>
                <ListCell $bg="#fff" />
              </GroupRow>
            ))}
          </React.Fragment>
        ))}
      </tbody>
    </ListTable>
    <Spacer />
    <RecordNav current="1" value="۱" dimBack />
    <EditTools canDelete={false} />
  </ListFrame>
);

const railItems = [
  ['کارتابل', <Person />],
  ['داشبورد', <Gauge />],
  ['تغییر رمز', <Lock />],
  ['ماشین\nحساب', <Calc />],
  ['خروج', <Power />],
];

export default function App() {
  return (
    <>
      <GlobalStyle />
      <Desktop>
        <TopStrip>
          <Orb />
          <TopControls>
            <WindowControls />
            <svg width="12" height="9" viewBox="0 0 12 9">
              <path d="M1 6.500C1 2 10 2 10 6.500L7.500 7.500 5.500 5.500 3.500 7.500z" fill="#fff" stroke="#4a5058" />
            </svg>
          </TopControls>
        </TopStrip>
        <Ribbon>
          <RibbonItems>
            <RibbonButton type="button" $width={38}><Folder /><span>سرجمع</span><Triangle size={5} /></RibbonButton>
            <RibbonButton type="button" $width={32}>
              <svg width="26" height="28" viewBox="0 0 26 28">
                <rect x="3" y="6" width="14" height="15" rx="2" fill="#3d76b5" />
                <rect x="6" y="7" width="8" height="6" fill="#eaf4fc" />
                <circle cx="12" cy="18" r="4" fill="#a9cdea" stroke="#24568f" />
              </svg>
              <span>عملیات</span>
            </RibbonButton>
          </RibbonItems>
          <RibbonCaption>توزیع</RibbonCaption>
        </Ribbon>
        <Body>
          <LeftRail>
            {railItems.map(([name, icon]) => (
              <RailButton key={name} type="button">{icon}<span>{name}</span></RailButton>
            ))}
          </LeftRail>
          <Workspace>
            <ShipmentList />
            <Understrip>
              <svg width="18" height="16" viewBox="0 0 18 16">
                <path d="M.5.5h17v15H.5z" fill="#e6f5ff" stroke="#8fc3de" />
                <path d="M2 13L8 3l6 10z" fill="#f5a623" />
              </svg>
            </Understrip>
            <StatusStrip><StatusBox /><StatusGrip><Grip /></StatusGrip></StatusStrip>
          </Workspace>
          <RightRail>
            <ActiveRail type="button"><Folder size={26} /><span>سرجمع</span></ActiveRail>
          </RightRail>
        </Body>
        <Taskbar>
          <TaskBox />
          {[39, 67, 55, 407, 75, 138, 384].map((w, i) => <TaskSlot key={i} $width={w} />)}
          <Grip />
        </Taskbar>
        <ShipmentWindow />
        <OrderWindow />
        <PointerMark width="9" height="14" viewBox="0 0 9 14">
          <path d="M2 1.500h2l.5.500.5-.5h2M4.500 2v10M2 12.500h2l.5-.5.5.5h2" fill="none" stroke="#333" />
        </PointerMark>
      </Desktop>
    </>
  );
}
